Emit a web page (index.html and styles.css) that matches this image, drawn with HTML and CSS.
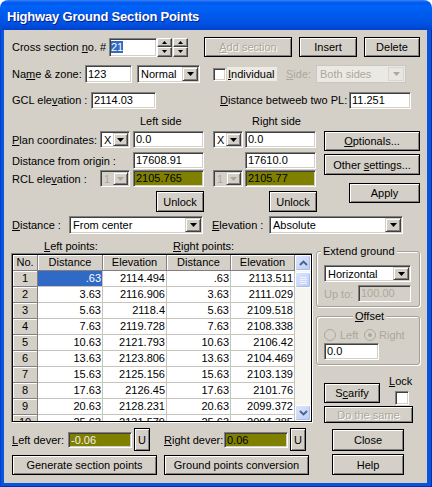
FILE: index.html
```html
<!DOCTYPE html>
<html lang="en">
<head>
  <meta charset="UTF-8" />
  <title>Highway Ground Section Points</title>
  <link rel="stylesheet" href="styles.css">
</head>
<body>
  <div class="window">
    <div class="titlebar">Highway Ground Section Points</div>
    <div class="frame">
      <div class="client">

        <div class="row row-cross">
          <span class="lab cross-lab">Cross section <u>n</u>o. #</span>
          <div class="edit cross-edit"><span class="hl">21</span></div>
          <div class="spin">
            <div class="sp"><svg width="5" height="3"><path d="M0 3h5L2.5 0z"/></svg></div>
            <div class="sp"><svg width="5" height="3"><path d="M0 0h5L2.5 3z"/></svg></div>
          </div>
          <div class="spin spin2">
            <div class="sp"><svg width="5" height="3"><path d="M0 3h5L2.5 0z"/></svg></div>
            <div class="sp"><svg width="5" height="3"><path d="M0 0h5L2.5 3z"/></svg></div>
          </div>
          <button class="btn dis add-btn"><u>A</u>dd section</button>
          <button class="btn insert-btn">Insert</button>
          <button class="btn delete-btn">Delete</button>
        </div>

        <div class="row row-name">
          <span class="lab name-lab">Na<u>m</u>e &amp; zone:</span>
          <div class="edit name-edit">123</div>
          <div class="combo zone-combo">
            <span class="ctext">Normal</span>
            <span class="drop"><svg width="7" height="4"><path d="M0 0h7L3.5 4z"/></svg></span>
          </div>
          <span class="check indiv-check"></span>
          <span class="indiv"><u>I</u>ndividual</span>
          <span class="lab dis-txt side-lab"><u>S</u>ide:</span>
          <div class="combo xp-dis side-combo">
            <span class="ctext">Both sides</span>
            <span class="drop"><svg width="7" height="4"><path d="M0 0h7L3.5 4z"/></svg></span>
          </div>
        </div>

        <div class="row row-gcl">
          <span class="lab gcl-lab">GCL ele<u>v</u>ation :</span>
          <div class="edit gcl-edit">2114.03</div>
          <span class="lab pl-lab"><u>D</u>istance betweeb two PL:</span>
          <div class="edit pl-edit">11.251</div>
        </div>

        <div class="row row-sides">
          <span class="left-side">Left side</span>
          <span>Right side</span>
        </div>

        <div class="coords">
          <div class="coord-rows">
            <div class="row crow">
              <span class="lab plan-lab"><u>P</u>lan coordinates:</span>
              <div class="combo small">
                <span class="ctext">X</span>
                <span class="drop"><svg width="7" height="4"><path d="M0 0h7L3.5 4z"/></svg></span>
              </div>
              <div class="edit cval gap3">0.0</div>
              <div class="combo small gap9">
                <span class="ctext">X</span>
                <span class="drop"><svg width="7" height="4"><path d="M0 0h7L3.5 4z"/></svg></span>
              </div>
              <div class="edit cval gap2">0.0</div>
            </div>
            <div class="row crow crow2">
              <span class="lab origin-lab">Distance from origin :</span>
              <div class="edit cval">17608.91</div>
              <div class="edit cval gap41">17610.0</div>
            </div>
            <div class="row crow crow3">
              <span class="lab plan-lab">RCL ele<u>v</u>ation :</span>
              <div class="combo small dis">
                <span class="ctext">1</span>
                <span class="drop"><svg width="7" height="4"><path d="M0 0h7L3.5 4z"/></svg></span>
              </div>
              <div class="edit cval olive gap3">2105.765</div>
              <div class="combo small dis gap9">
                <span class="ctext">1</span>
                <span class="drop"><svg width="7" height="4"><path d="M0 0h7L3.5 4z"/></svg></span>
              </div>
              <div class="edit cval olive gap2">2105.77</div>
            </div>
            <div class="row unlock-row">
              <button class="btn unlock1">Unlock</button>
              <button class="btn unlock2">Unlock</button>
            </div>
          </div>
          <div class="side-btns">
            <button class="btn optionals"><u>O</u>ptionals...</button>
            <button class="btn settings">Other <u>s</u>ettings...</button>
            <button class="btn apply">Apply</button>
          </div>
        </div>

        <div class="row row-dist">
          <span class="lab dist-lab"><u>D</u>istance :</span>
          <div class="combo wide">
            <span class="ctext">From center</span>
            <span class="drop"><svg width="7" height="4"><path d="M0 0h7L3.5 4z"/></svg></span>
          </div>
          <span class="lab elev-lab"><u>E</u>levation :</span>
          <div class="combo wide">
            <span class="ctext">Absolute</span>
            <span class="drop"><svg width="7" height="4"><path d="M0 0h7L3.5 4z"/></svg></span>
          </div>
        </div>

        <div class="mid">
          <div class="points">
            <div class="points-labels">
              <span class="lp"><u>L</u>eft points:</span>
              <span><u>R</u>ight points:</span>
            </div>
            <div class="gridwrap">
              <div class="gridbox">
                <div class="cells">
                  <div class="hd">No.</div><div class="hd">Distance</div><div class="hd">Elevation</div><div class="hd">Distance</div><div class="hd">Elevation</div>
                  <div class="fx">1</div><div class="cl cur">.63</div><div class="cl">2114.494</div><div class="cl">.63</div><div class="cl">2113.511</div>
                  <div class="fx">2</div><div class="cl">3.63</div><div class="cl">2116.906</div><div class="cl">3.63</div><div class="cl">2111.029</div>
                  <div class="fx">3</div><div class="cl">5.63</div><div class="cl">2118.4</div><div class="cl">5.63</div><div class="cl">2109.518</div>
                  <div class="fx">4</div><div class="cl">7.63</div><div class="cl">2119.728</div><div class="cl">7.63</div><div class="cl">2108.338</div>
                  <div class="fx">5</div><div class="cl">10.63</div><div class="cl">2121.793</div><div class="cl">10.63</div><div class="cl">2106.42</div>
                  <div class="fx">6</div><div class="cl">13.63</div><div class="cl">2123.806</div><div class="cl">13.63</div><div class="cl">2104.469</div>
                  <div class="fx">7</div><div class="cl">15.63</div><div class="cl">2125.156</div><div class="cl">15.63</div><div class="cl">2103.139</div>
                  <div class="fx">8</div><div class="cl">17.63</div><div class="cl">2126.45</div><div class="cl">17.63</div><div class="cl">2101.76</div>
                  <div class="fx">9</div><div class="cl">20.63</div><div class="cl">2128.231</div><div class="cl">20.63</div><div class="cl">2099.372</div>
                  <div class="fx">10</div><div class="cl">25.63</div><div class="cl">2131.579</div><div class="cl">25.63</div><div class="cl">2094.385</div>
                </div>
                <div class="vscroll">
                  <div class="sb-btn"><svg width="9" height="6"><path d="M1 5L4.5 1.5L8 5" fill="none" stroke="#4d6185" stroke-width="1.8"/></svg></div>
                  <div class="sb-btn sb-thumb"><svg width="7" height="7"><path d="M0 .5h7M0 2.5h7M0 4.5h7M0 6.5h7" stroke="#eef3fe"/></svg></div>
                  <div class="sb-track"></div>
                  <div class="sb-btn"><svg width="9" height="6"><path d="M1 1L4.5 4.5L8 1" fill="none" stroke="#4d6185" stroke-width="1.8"/></svg></div>
                </div>
              </div>
            </div>
          </div>

          <div class="side-panel">
            <div class="group extend">
              <span class="gtitle">Extend ground</span>
              <div class="combo horiz">
                <span class="ctext">Horizontal</span>
                <span class="drop"><svg width="7" height="4"><path d="M0 0h7L3.5 4z"/></svg></span>
              </div>
              <div class="row upto-row">
                <span class="lab dis-txt upto-lab">Up to:</span>
                <div class="edit dis-edit upto-edit">100.00</div>
              </div>
            </div>
            <div class="group offset">
              <span class="gtitle center"><u>O</u>ffset</span>
              <div class="row radio-row">
                <span class="radio"></span>
                <span class="dis-txt rl">Left</span>
                <span class="radio on"></span>
                <span class="dis-txt rr">Right</span>
              </div>
              <div class="edit offset-edit">0.0</div>
            </div>
            <div class="scarify-row">
              <button class="btn scarify">S<u>c</u>arify</button>
              <div class="lock">
                <span><u>L</u>ock</span>
                <span class="check lock-check"></span>
              </div>
            </div>
            <button class="btn dis same">Do the same</button>
          </div>
        </div>

        <div class="row row-dever">
          <span class="lab ldever-lab"><u>L</u>eft dever:</span>
          <div class="edit olive dever light">-0.06</div>
          <button class="btn ubtn">U</button>
          <span class="lab rdever-lab"><u>R</u>ight dever:</span>
          <div class="edit olive dever">0.06</div>
          <button class="btn ubtn">U</button>
          <button class="btn close">Close</button>
        </div>

        <div class="row row-bottom">
          <button class="btn gen">Generate section points</button>
          <button class="btn conv">Ground points conversion</button>
          <button class="btn help">Help</button>
        </div>

      </div>
    </div>
  </div>
</body>
</html>
```

FILE: styles.css
```css
body {
  margin: 0;
  background: #fff;
  font-family: 'Liberation Sans', Arial, sans-serif;
  font-size: 11px;
  color: #000;
}
.window {
  width: 432px;
  height: 487px;
  display: flex;
  flex-direction: column;
  border-radius: 8px 8px 0 0;
  overflow: hidden;
}
.titlebar {
  height: 30px;
  box-sizing: border-box;
  padding: 3px 0 0 7px;
  line-height: 27px;
  color: #fff;
  font-weight: bold;
  font-size: 13px;
  letter-spacing: -0.2px;
  text-shadow: 1px 1px #0b1f8a;
  background: linear-gradient(to bottom, #3c8cf7 0, #1d6cf2 1px, #0058ee 3px, #0062f7 6px, #005cf0 12px, #0055e6 20px, #0050df 25px, #0046d4 28px, #0042cc 30px);
}
.frame {
  flex: 1;
  display: flex;
  background: #0855dd;
  padding: 0 5px 4px 4px;
  box-shadow: inset 1px 0 #0a3fc8, inset -1px 0 #0a2fa8, inset 0 -1px #0a2fa8;
}
.client {
  flex: 1;
  background: #d4d0c8;
  padding: 7px 0 0 8px;
  display: flex;
  flex-direction: column;
}

.row {
  display: flex;
  align-items: center;
}
.lab {
  flex-shrink: 0;
  white-space: nowrap;
}
.dis-txt {
  color: #aca899;
}

/* edits */
.edit {
  box-sizing: border-box;
  flex-shrink: 0;
  height: 17px;
  background: #fff;
  border: 1px solid;
  border-color: #808080 #fff #fff #808080;
  box-shadow: inset 1px 1px #404040, inset -1px -1px #d4d0c8;
  padding: 0 2px;
  line-height: 15px;
  white-space: nowrap;
  overflow: hidden;
}
.olive {
  background: #808000;
}
.dis-edit {
  background: #d4d0c8;
  color: #aca899;
}
.hl {
  background: #316ac5;
  color: #fff;
}

/* combo boxes */
.combo {
  box-sizing: border-box;
  flex-shrink: 0;
  display: flex;
  height: 18px;
  background: #fff;
  border: 1px solid;
  border-color: #808080 #fff #fff #808080;
  box-shadow: inset 1px 1px #404040, inset -1px -1px #d4d0c8;
  padding: 1px;
}
.ctext {
  flex: 1;
  padding-left: 2px;
  line-height: 14px;
  white-space: nowrap;
  overflow: hidden;
}
.drop {
  box-sizing: border-box;
  width: 16px;
  display: flex;
  align-items: center;
  justify-content: center;
  background: #d4d0c8;
  border: 1px solid;
  border-color: #d4d0c8 #404040 #404040 #d4d0c8;
  box-shadow: inset 1px 1px #fff, inset -1px -1px #808080;
}
.combo.small .drop {
  width: 15px;
}
.combo.dis {
  background: #d4d0c8;
  color: #aca899;
}
.combo.dis svg,
.combo.xp-dis svg {
  fill: #aca899;
}
.combo.xp-dis {
  background: #ebe9e3;
  color: #aca899;
  border-color: #c9c7c0;
  box-shadow: none;
}
.combo.xp-dis .drop {
  background: #e8e6e0;
  border-color: #d8d6cf;
  box-shadow: none;
}

/* buttons */
.btn {
  box-sizing: border-box;
  flex-shrink: 0;
  height: 20px;
  padding: 0;
  font: inherit;
  color: #000;
  background: #d4d0c8;
  border: 1px solid #000;
  box-shadow: inset 1px 1px #fff, inset -1px -1px #808080;
  white-space: nowrap;
}
.btn.dis {
  color: #aca899;
  text-shadow: 1px 1px #fff;
}

/* checkboxes and radios */
.check {
  box-sizing: border-box;
  flex-shrink: 0;
  width: 13px;
  height: 13px;
  background: #fff;
  border: 1px solid;
  border-color: #808080 #fff #fff #808080;
  box-shadow: inset 1px 1px #404040, inset -1px -1px #d4d0c8;
}
.radio {
  box-sizing: border-box;
  flex-shrink: 0;
  width: 12px;
  height: 12px;
  border: 1px solid #aca899;
  border-radius: 50%;
  background: #d4d0c8;
  display: flex;
  align-items: center;
  justify-content: center;
}
.radio.on::after {
  content: "";
  width: 4px;
  height: 4px;
  border-radius: 50%;
  background: #aca899;
}

/* spinners */
.spin {
  flex-shrink: 0;
  width: 15px;
  height: 19px;
  display: flex;
  flex-direction: column;
}
.spin2 {
  margin-left: 1px;
}
.sp {
  flex: 1;
  box-sizing: border-box;
  display: flex;
  align-items: center;
  justify-content: center;
  background: #d4d0c8;
  border: 1px solid;
  border-color: #fff #404040 #404040 #fff;
  box-shadow: inset -1px -1px #808080;
}

/* first rows */
.cross-lab { width: 97px; }
.cross-edit { width: 48px; height: 19px; padding-left: 1px; line-height: 17px; }
.add-btn { width: 88px; margin-left: 16px; }
.insert-btn { width: 58px; margin-left: 7px; }
.delete-btn { width: 56px; margin-left: 7px; }

.row-name { margin-top: 7px; height: 20px; }
.name-lab { width: 73px; }
.name-edit { width: 47px; height: 18px; line-height: 16px; }
.zone-combo { width: 63px; margin-left: 5px; }
.indiv-check { margin-left: 13px; }
.indiv {
  margin-left: 1px;
  width: 50px;
  box-sizing: border-box;
  padding-left: 1px;
  line-height: 14px;
  background: #eceae3;
}
.side-lab { width: 30px; margin-left: 9px; }
.side-combo { width: 90px; }

.row-gcl { margin-top: 6px; height: 20px; }
.gcl-lab { width: 79px; }
.gcl-edit { width: 65px; }
.pl-lab { width: 129px; margin-left: 64px; }
.pl-edit { width: 62px; }

.row-sides { margin-top: 4px; height: 14px; }
.left-side { margin-left: 128px; width: 112px; }

/* coordinates block */
.coords {
  margin-top: 3px;
  display: flex;
}
.coord-rows {
  width: 304px;
}
.crow { height: 17px; }
.crow2 { margin-top: 4px; }
.crow3 { margin-top: 1px; }
.plan-lab { width: 88px; }
.origin-lab { width: 121px; }
.combo.small { width: 30px; height: 17px; }
.cval { width: 71px; }
.gap2 { margin-left: 2px; }
.gap3 { margin-left: 3px; }
.gap9 { margin-left: 9px; }
.gap41 { margin-left: 41px; }
.unlock-row { margin-top: 4px; }
.unlock1 { width: 48px; height: 21px; margin-left: 144px; }
.unlock2 { width: 48px; height: 21px; margin-left: 65px; }

.side-btns {
  margin-left: 8px;
  display: flex;
  flex-direction: column;
  align-items: flex-start;
}
.optionals { width: 96px; }
.settings { width: 96px; height: 21px; margin-top: 3px; }
.apply { width: 71px; margin-top: 8px; margin-left: 25px; }

.row-dist { margin-top: 4px; height: 18px; }
.dist-lab { width: 57px; }
.elev-lab { width: 57px; margin-left: 9px; }
.combo.wide { width: 134px; }

/* points grid */
.mid {
  display: flex;
  margin-left: -1px;
}
.points {
  width: 302px;
}
.points-labels {
  margin-top: 6px;
  height: 13px;
  line-height: 13px;
  display: flex;
}
.lp {
  margin-left: 33px;
  width: 129px;
}
.gridwrap {
  border: 1px solid;
  border-color: #808080 #fff #fff #808080;
}
.gridbox {
  border: 1px solid #000;
  height: 166px;
  display: flex;
  overflow: hidden;
}
.cells {
  display: grid;
  grid-template-columns: 25px 65px 64px 64px 64px;
  grid-auto-rows: 16px;
  width: 282px;
  background: #fff;
}
.hd, .fx, .cl {
  box-sizing: border-box;
  line-height: 15px;
  white-space: nowrap;
  overflow: hidden;
}
.hd, .fx {
  background: #d4d0c8;
  text-align: center;
  border-right: 1px solid #808080;
  border-bottom: 1px solid #808080;
  box-shadow: inset 1px 1px #fff;
}
.cl {
  text-align: right;
  padding-right: 1px;
  border-right: 1px solid #c8c4bc;
  border-bottom: 1px solid #c8c4bc;
}
.cl.cur {
  background: #316ac5;
  color: #fff;
}
.vscroll {
  width: 16px;
  display: flex;
  flex-direction: column;
  background: #f6f5f0;
}
.sb-btn {
  box-sizing: border-box;
  height: 16px;
  display: flex;
  align-items: center;
  justify-content: center;
  background: linear-gradient(135deg, #dbe5fd, #bccdf7);
  border: 1px solid #fff;
  border-radius: 2px;
  box-shadow: inset -1px -1px #a9bdeb;
}
.sb-thumb {
  margin-top: 1px;
}
.sb-track {
  flex: 1;
}

/* right panel */
.side-panel {
  margin-left: 3px;
  width: 104px;
  display: flex;
  flex-direction: column;
}
.group {
  box-sizing: border-box;
  display: flex;
  flex-direction: column;
  align-items: flex-start;
  padding: 0 0 4px 7px;
  border: 1px solid #a3a098;
  border-radius: 3px;
  box-shadow: inset 1px 1px #fff, 1px 1px #fff;
}
.gtitle {
  margin: -7px 0 0 -3px;
  padding: 0 2px;
  line-height: 13px;
  background: #d4d0c8;
}
.gtitle.center {
  align-self: center;
  margin-left: -4px;
}
.extend { margin-top: 17px; }
.horiz { width: 87px; height: 17px; margin-top: 7px; }
.upto-row { margin-top: 3px; }
.upto-lab { width: 34px; }
.upto-edit { width: 53px; }
.offset { margin-top: 9px; }
.radio-row { margin-top: 6px; height: 12px; }
.rl { margin-left: 4px; width: 24px; }
.rr { margin-left: 3px; }
.offset-edit { width: 55px; margin-top: 2px; }

.scarify-row {
  display: flex;
  margin-top: 10px;
}
.scarify { width: 56px; margin: 8px 0 0 8px; }
.lock {
  margin-left: 9px;
  display: flex;
  flex-direction: column;
  line-height: 13px;
}
.lock-check { width: 14px; height: 14px; margin: 3px 0 0 6px; }
.same { width: 89px; height: 17px; margin: 1px 0 0 8px; }

/* bottom rows */
.row-dever { margin-top: 5px; height: 23px; }
.ldever-lab { width: 56px; }
.rdever-lab { width: 60px; margin-left: 14px; }
.dever { width: 64px; height: 16px; line-height: 14px; }
.dever.light { color: #f0f0f0; }
.ubtn { width: 16px; height: 23px; margin-left: 2px; }
.close { width: 72px; height: 22px; margin-left: 26px; }

.row-bottom { margin-top: 3px; height: 21px; }
.gen { width: 145px; }
.conv { width: 145px; margin-left: 7px; }
.help { width: 72px; height: 21px; margin-left: 23px; }
```
